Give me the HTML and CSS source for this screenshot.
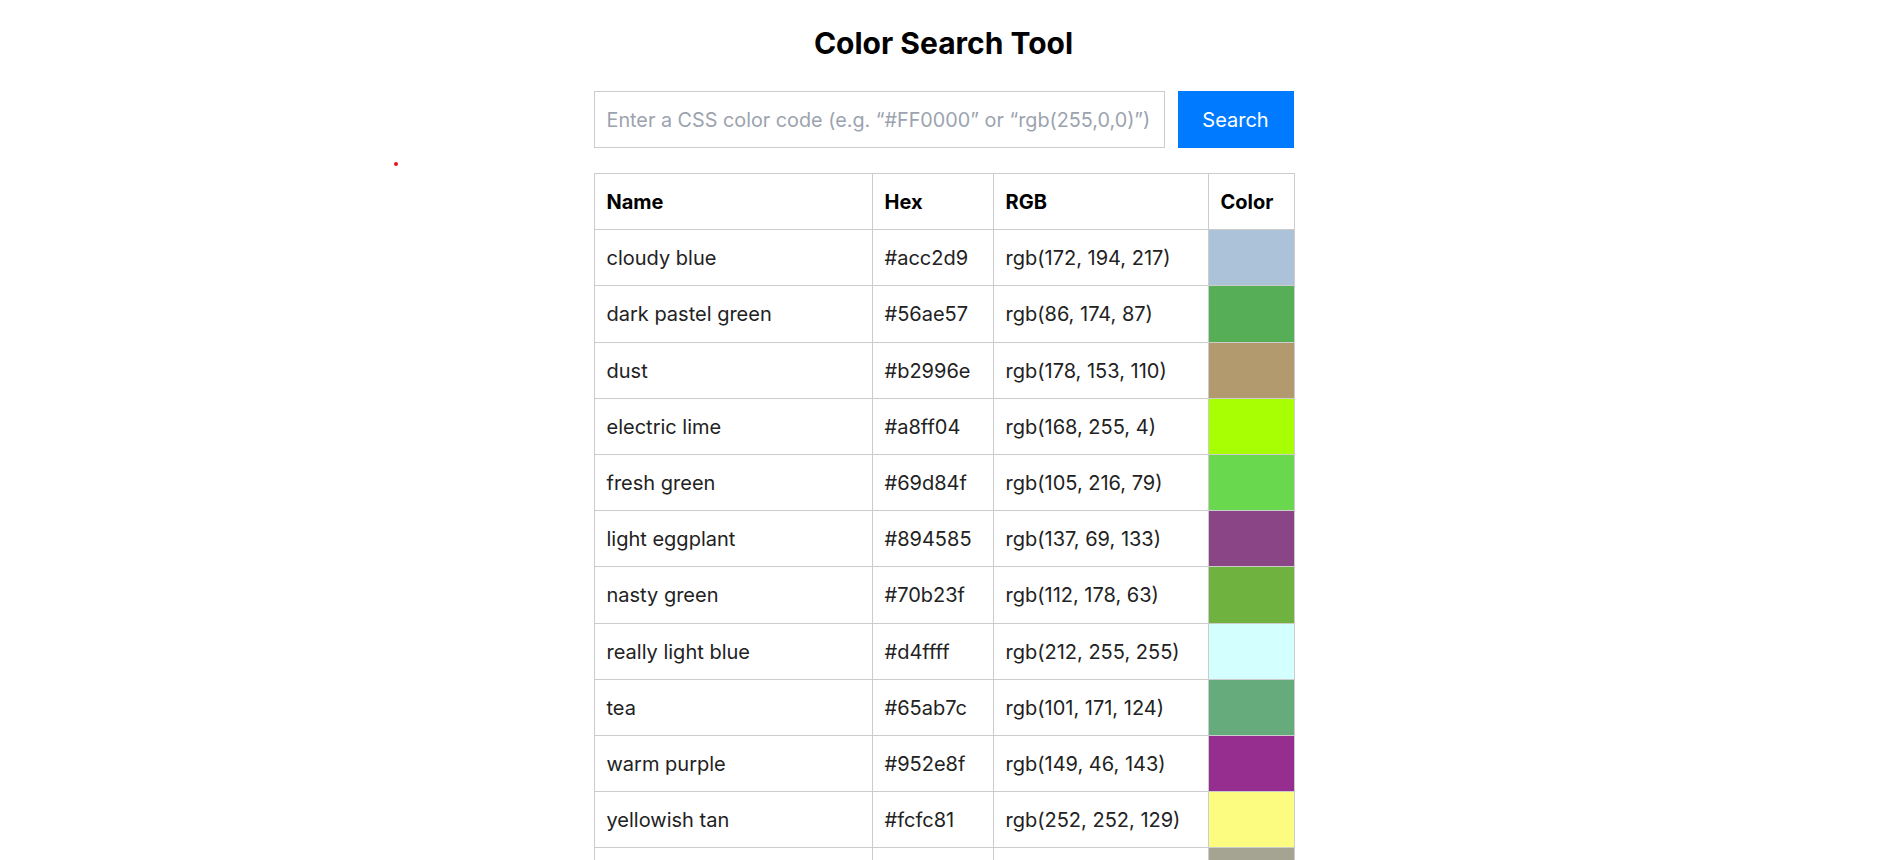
FILE: index.html
```html
<!DOCTYPE html>
<html lang="en">
<head>
<meta charset="utf-8">
<title>Color Search Tool</title>
<link rel="stylesheet" href="styles.css">
</head>
<body>
<span class="dot"></span>
<main class="container">
  <h1 class="title">Color Search Tool</h1>
  <form class="search">
    <input class="search-input" type="text" placeholder="Enter a CSS color code (e.g. “#FF0000” or “rgb(255,0,0)”)">
    <button class="search-btn" type="button">Search</button>
  </form>
  <table class="colors">
    <colgroup>
      <col class="col-name"><col class="col-hex"><col class="col-rgb"><col class="col-color">
    </colgroup>
    <thead>
      <tr><th>Name</th><th>Hex</th><th>RGB</th><th>Color</th></tr>
    </thead>
    <tbody>
      <tr><td>cloudy blue</td><td>#acc2d9</td><td>rgb(172, 194, 217)</td><td class="swatch" style="background:#acc2d9"></td></tr>
      <tr><td>dark pastel green</td><td>#56ae57</td><td>rgb(86, 174, 87)</td><td class="swatch" style="background:#56ae57"></td></tr>
      <tr><td>dust</td><td>#b2996e</td><td>rgb(178, 153, 110)</td><td class="swatch" style="background:#b2996e"></td></tr>
      <tr><td>electric lime</td><td>#a8ff04</td><td>rgb(168, 255, 4)</td><td class="swatch" style="background:#a8ff04"></td></tr>
      <tr><td>fresh green</td><td>#69d84f</td><td>rgb(105, 216, 79)</td><td class="swatch" style="background:#69d84f"></td></tr>
      <tr><td>light eggplant</td><td>#894585</td><td>rgb(137, 69, 133)</td><td class="swatch" style="background:#894585"></td></tr>
      <tr><td>nasty green</td><td>#70b23f</td><td>rgb(112, 178, 63)</td><td class="swatch" style="background:#70b23f"></td></tr>
      <tr><td>really light blue</td><td>#d4ffff</td><td>rgb(212, 255, 255)</td><td class="swatch" style="background:#d4ffff"></td></tr>
      <tr><td>tea</td><td>#65ab7c</td><td>rgb(101, 171, 124)</td><td class="swatch" style="background:#65ab7c"></td></tr>
      <tr><td>warm purple</td><td>#952e8f</td><td>rgb(149, 46, 143)</td><td class="swatch" style="background:#952e8f"></td></tr>
      <tr><td>yellowish tan</td><td>#fcfc81</td><td>rgb(252, 252, 129)</td><td class="swatch" style="background:#fcfc81"></td></tr>
      <tr><td>cement</td><td>#a5a391</td><td>rgb(165, 163, 145)</td><td class="swatch" style="background:#a5a391"></td></tr>
    </tbody>
  </table>
</main>
</body>
</html>
```
FILE: styles.css
```css
html, body {
  margin: 0;
  padding: 0;
  background: #fff;
}
body {
  font-family: Inter, "Noto Sans", sans-serif;
  color: #222;
  overflow: hidden;
}
.dot {
  position: absolute;
  left: 394px;
  top: 162px;
  width: 4px;
  height: 4px;
  border-radius: 50%;
  background: #e8141a;
}
.container {
  width: 700px;
  margin: 0 auto;
  padding-top: 25px;
}
.title {
  margin: 0 0 30px;
  font-size: 30px;
  font-weight: 700;
  line-height: normal;
  text-align: center;
  color: #000;
}
.search {
  display: flex;
  gap: 13px;
  margin: 0 0 25px;
}
.search-input {
  flex: 1;
  min-width: 0;
  box-sizing: border-box;
  height: 57px;
  padding: 0 12px;
  border: 1px solid #ccc;
  border-radius: 0;
  font-family: Inter, "Noto Sans", sans-serif;
  font-size: 19.8px;
  color: #222;
  outline: none;
}
.search-input::placeholder {
  color: #9ca3af;
}
.search-btn {
  width: 116px;
  height: 57px;
  padding: 0;
  border: none;
  border-radius: 0;
  background: #007bff;
  color: #fff;
  font-family: Inter, "Noto Sans", sans-serif;
  font-size: 20px;
}
.colors {
  width: 700px;
  table-layout: fixed;
  border-collapse: collapse;
  font-size: 20px;
}
.col-name { width: 278px; }
.col-hex { width: 121px; }
.col-rgb { width: 215px; }
.col-color { width: 86px; }
.colors th,
.colors td {
  border: 1px solid #ccc;
  padding: 17px 12px 15px;
  line-height: 23.2px;
  text-align: left;
  white-space: nowrap;
}
.colors th {
  font-weight: 700;
  color: #000;
}
.colors td.swatch {
  padding: 0;
}
```
